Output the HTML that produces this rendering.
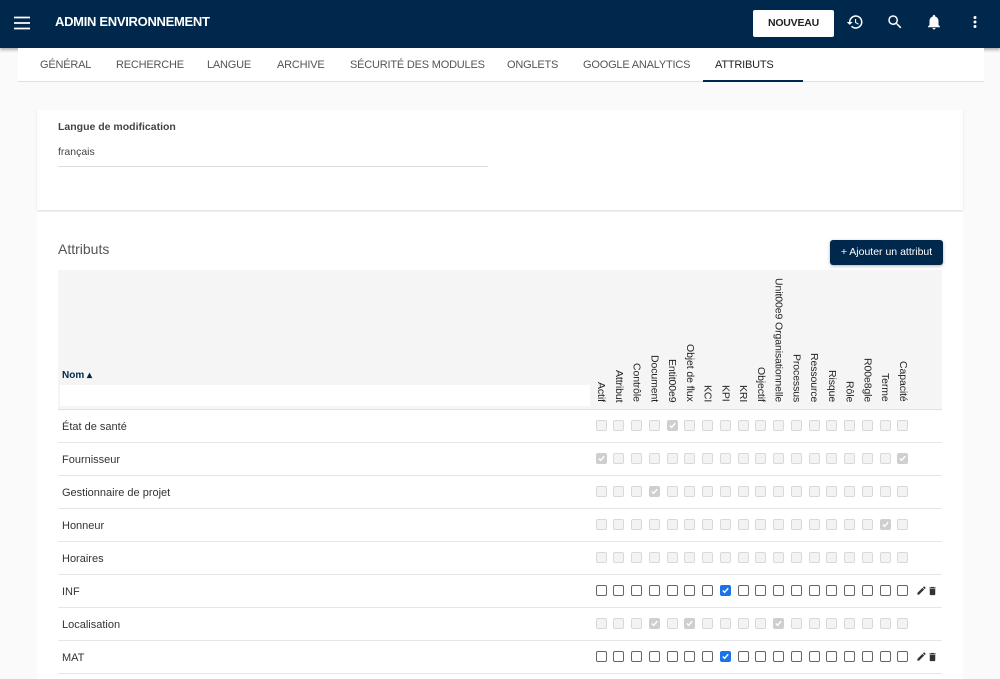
<!DOCTYPE html>
<html><head><meta charset="utf-8"><style>
*{box-sizing:border-box;margin:0;padding:0}
body{width:1000px;height:679px;overflow:hidden;background:#fafafa;font-family:"Liberation Sans",Arial,sans-serif;position:relative;color:#333}
.top{position:absolute;left:0;top:0;width:1000px;height:48px;background:#00284d;box-shadow:0 2px 3px rgba(0,0,0,.3)}
.title{position:absolute;left:55px;top:14px;color:#fff;font-weight:bold;font-size:13px;letter-spacing:-0.3px}
.btn{position:absolute;left:753px;top:10px;width:81px;height:27px;background:#fff;border-radius:2px;font-size:10.5px;font-weight:bold;color:#222;text-align:center;line-height:27px;letter-spacing:-0.2px}
.tabs{position:absolute;left:18px;top:48px;width:966px;height:34px;border-bottom:1px solid #e0e0e0;background:#fff}
.tab{position:absolute;top:11px;font-size:11px;color:#555;letter-spacing:-0.2px}
.abs{position:absolute}
.card{position:absolute;background:#fff}
.vh{position:absolute;writing-mode:vertical-rl;font-size:10.5px;color:#222;bottom:0;left:0;white-space:nowrap;letter-spacing:-0.1px}
.row{position:absolute;left:58px;width:884px;height:33px;border-bottom:1px solid #e6e6e6;font-size:11px;color:#333}
.row span{position:absolute;left:4px;top:11px}
.cb{position:absolute;width:11px;height:11px;border-radius:2px}
.d{background:#f3f3f3;border:1px solid #d8d8d8}
.dc{background:#cfcfcf;border:1px solid #cfcfcf}
.e{border:1.3px solid #666;background:#fff}
.ec{background:#1a73e8;border:1px solid #1a73e8}
.cb svg{position:absolute;left:0;top:0}
</style></head><body>
<div class="top">
<svg class="abs" style="left:14px;top:16px" width="16" height="14" viewBox="0 0 16 14"><path d="M0 1.5h16M0 7h16M0 12.5h16" stroke="#fff" stroke-width="1.8"/></svg>
<div class="title">ADMIN ENVIRONNEMENT</div>
<div class="btn">NOUVEAU</div>
<svg class="abs" style="left:846px;top:13px" width="18" height="18" viewBox="0 0 24 24"><path fill="#fff" d="M13 3a9 9 0 0 0-9 9H1l3.9 3.9L9 12H6a7 7 0 1 1 2.05 4.95l-1.42 1.42A9 9 0 1 0 13 3zm-1 5v5l4.28 2.54.72-1.21-3.5-2.08V8H12z"/></svg>
<svg class="abs" style="left:886px;top:13px" width="18" height="18" viewBox="0 0 24 24"><path fill="#fff" d="M15.5 14h-.79l-.28-.27A6.470 6.470 0 0 0 16 9.5 6.5 6.5 0 1 0 9.5 16c1.61 0 3.090-.59 4.230-1.57l.27.28v.79l5 4.99L20.49 19l-4.99-5zm-6 0C7.01 14 5 11.99 5 9.5S7.01 5 9.5 5 14 7.01 14 9.5 11.99 14 9.5 14z"/></svg>
<svg class="abs" style="left:925px;top:12px" width="18" height="20" viewBox="0 0 24 24"><path fill="#fff" d="M12 22c1.1 0 2-.9 2-2h-4c0 1.1.9 2 2 2zm6-6v-5c0-3.07-1.63-5.64-4.5-6.32V4a1.5 1.5 0 0 0-3 0v.68C7.64 5.36 6 7.92 6 11v5l-2 2v1h16v-1l-2-2z"/></svg>
<svg class="abs" style="left:966px;top:13px" width="18" height="18" viewBox="0 0 24 24"><path fill="#fff" d="M12 8a2 2 0 1 0 0-4 2 2 0 0 0 0 4zm0 2a2 2 0 1 0 0 4 2 2 0 0 0 0-4zm0 6a2 2 0 1 0 0 4 2 2 0 0 0 0-4z"/></svg>
</div>
<div class="tabs">
<div class="tab" style="left:22px">GÉNÉRAL</div>
<div class="tab" style="left:98px">RECHERCHE</div>
<div class="tab" style="left:189px">LANGUE</div>
<div class="tab" style="left:259px">ARCHIVE</div>
<div class="tab" style="left:332px">SÉCURITÉ DES MODULES</div>
<div class="tab" style="left:489px">ONGLETS</div>
<div class="tab" style="left:565px">GOOGLE ANALYTICS</div>
<div class="tab" style="left:697px;color:#222">ATTRIBUTS</div>
<div class="abs" style="left:685px;top:32px;width:100px;height:2px;background:#00284d"></div>
</div>
<div class="card" style="left:37px;top:110px;width:926px;height:100px;box-shadow:0 1px 2px rgba(0,0,0,.12)">
<div class="abs" style="left:21px;top:11px;font-size:10.5px;font-weight:bold;color:#444">Langue de modification</div>
<div class="abs" style="left:21px;top:36px;font-size:10.5px;color:#444">français</div>
<div class="abs" style="left:21px;top:56px;width:430px;height:1px;background:#ddd"></div>
</div>
<div class="card" style="left:37px;top:212px;width:926px;height:467px">
<div class="abs" style="left:21px;top:29px;font-size:14px;color:#555">Attributs</div>
<div class="abs" style="left:793px;top:28px;width:113px;height:25px;background:#00284d;border-radius:3px;color:#fff;font-size:10.5px;text-align:center;line-height:25px;box-shadow:0 1px 3px rgba(0,0,0,.3)">+ Ajouter un attribut</div>
</div>
<div class="abs" style="left:58px;top:270px;width:884px;height:140px;background:#f5f5f5;border-bottom:1px solid #e0e0e0">
<div class="abs" style="left:4px;top:100px;font-size:10px;font-weight:bold;color:#00284d">Nom ▴</div>
<div class="abs" style="left:2px;top:115px;width:530px;height:21px;background:#fff"></div>
<div class="abs" id="hd" style="left:0;top:0;width:884px;height:132px"></div>
</div>
<div id="rows"></div>
<script>
var L=["Actif","Attribut","Contrôle","Document","Entit00e9","Objet de flux","KCI","KPI","KRI","Objectif","Unit00e9 Organisationnelle","Processus","Ressource","Risque","Rôle","R00e8gle","Terme","Capacité"];
var hd=document.getElementById('hd'),h='';
for(var i=0;i<18;i++){var cx=601+i*17.75-58;h+='<div class="vh" style="left:'+(cx-6)+'px">'+L[i]+'</div>';}
hd.innerHTML=h;
var R=[["État de santé",0,[4]],["Fournisseur",0,[0,17]],["Gestionnaire de projet",0,[3]],["Honneur",0,[16]],["Horaires",0,[]],["INF",1,[7]],["Localisation",0,[3,5,10]],["MAT",1,[7]]];
var s='';
var chk='<svg width="9" height="9" viewBox="0 0 10 10"><path d="M2 5l2 2 4-4.5" stroke="#fff" stroke-width="1.6" fill="none"/></svg>';
R.forEach(function(r,k){var top=410+k*33;s+='<div class="row" style="top:'+top+'px"><span>'+r[0]+'</span>';
for(var i=0;i<18;i++){var x=601+i*17.75-58-5.5;var c=r[2].indexOf(i)>=0;var cl=r[1]?(c?'ec':'e'):(c?'dc':'d');
s+='<div class="cb '+cl+'" style="left:'+x+'px;top:10px">'+(c?chk:'')+'</div>';}
if(r[1])s+='<svg class="abs" style="left:858px;top:10px" width="11" height="11" viewBox="0 0 24 24"><path fill="#333" d="M3 17.25V21h3.75L17.81 9.94l-3.75-3.75L3 17.25zM20.71 7.04a1 1 0 0 0 0-1.41l-2.34-2.34a1 1 0 0 0-1.41 0l-1.83 1.83 3.75 3.75 1.830-1.83z"/></svg><svg class="abs" style="left:869px;top:10px" width="11" height="12" viewBox="0 0 24 24"><path fill="#333" d="M6 19c0 1.1.9 2 2 2h8c1.1 0 2-.9 2-2V7H6v12zM19 4h-3.5l-1-1h-5l-1 1H5v2h14V4z"/></svg>';
s+='</div>';});
document.getElementById('rows').innerHTML=s;
</script>
</body></html>
